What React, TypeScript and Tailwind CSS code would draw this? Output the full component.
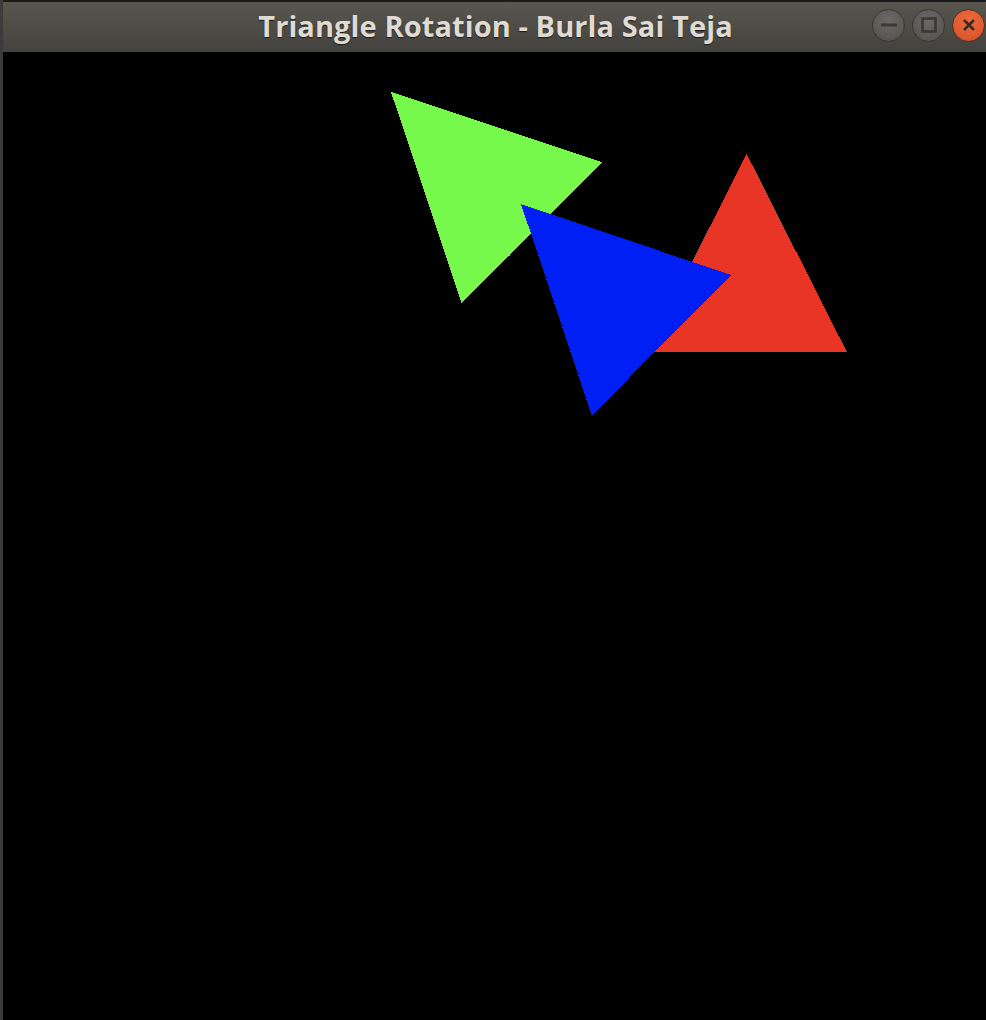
export default function App() {
  return (
    <div className="flex h-[1020px] w-[986px] overflow-hidden bg-black">
      <div className="w-[3px] shrink-0 bg-[#3b3b3b]" />
      <div className="flex flex-1 flex-col">
        <TitleBar />
        <div className="flex-1 bg-black">
          <svg width="983" height="968" viewBox="0 0 983 968" shapeRendering="crispEdges">
            <polygon points="743.7,102 843.7,299.7 643.7,299.7" fill="#e93525" />
            <polygon points="388,40 599.7,110.3 458.7,251.3" fill="#76f94b" />
            <polygon points="518,152 728,223 588.7,363.7" fill="#001ff5" />
          </svg>
        </div>
      </div>
    </div>
  );
}

function TitleBar() {
  return (
    <div className="grid h-[52px] grid-cols-[1fr_auto_1fr] items-center border-t-[2px] border-[#1c1c1b] bg-[linear-gradient(180deg,#58564f_0%,#4d4b46_55%,#43423e_100%)]">
      <div />
      <p className="ml-[2px] pb-[4px] font-['Open_Sans','DejaVu_Sans',sans-serif] text-[29px] font-bold leading-none tracking-[0.1px] text-[#dfdbd2] [text-shadow:0_1px_1px_#1d1c1a]">
        Triangle Rotation - Burla Sai Teja
      </p>
      <div className="flex items-center justify-end gap-[7px] pr-[1px] pb-[4px]">
        <WinButton>
          <svg width="18" height="18" viewBox="0 0 18 18">
            <rect x="1" y="7.5" width="16" height="3" fill="#3a3936" />
          </svg>
        </WinButton>
        <WinButton>
          <svg width="18" height="18" viewBox="0 0 18 18">
            <rect x="2.5" y="2.5" width="13" height="13" fill="none" stroke="#3a3936" strokeWidth="2.6" />
          </svg>
        </WinButton>
        <button
          type="button"
          className="flex h-[33px] w-[33px] items-center justify-center rounded-full border border-[#4a3328] bg-[radial-gradient(circle_at_50%_35%,#ef6a3f_0%,#e05a30_60%,#c94c27_100%)]"
        >
          <svg width="14" height="14" viewBox="0 0 14 14">
            <path d="M2 2 L12 12 M12 2 L2 12" stroke="#3b2a1f" strokeWidth="2.6" />
          </svg>
        </button>
      </div>
    </div>
  );
}

function WinButton({ children }: { children: React.ReactNode }) {
  return (
    <button
      type="button"
      className="flex h-[33px] w-[33px] items-center justify-center rounded-full border border-[#383734] bg-[radial-gradient(circle_at_50%_35%,#6a6965_0%,#5b5a56_60%,#4e4d4a_100%)]"
    >
      {children}
    </button>
  );
}
